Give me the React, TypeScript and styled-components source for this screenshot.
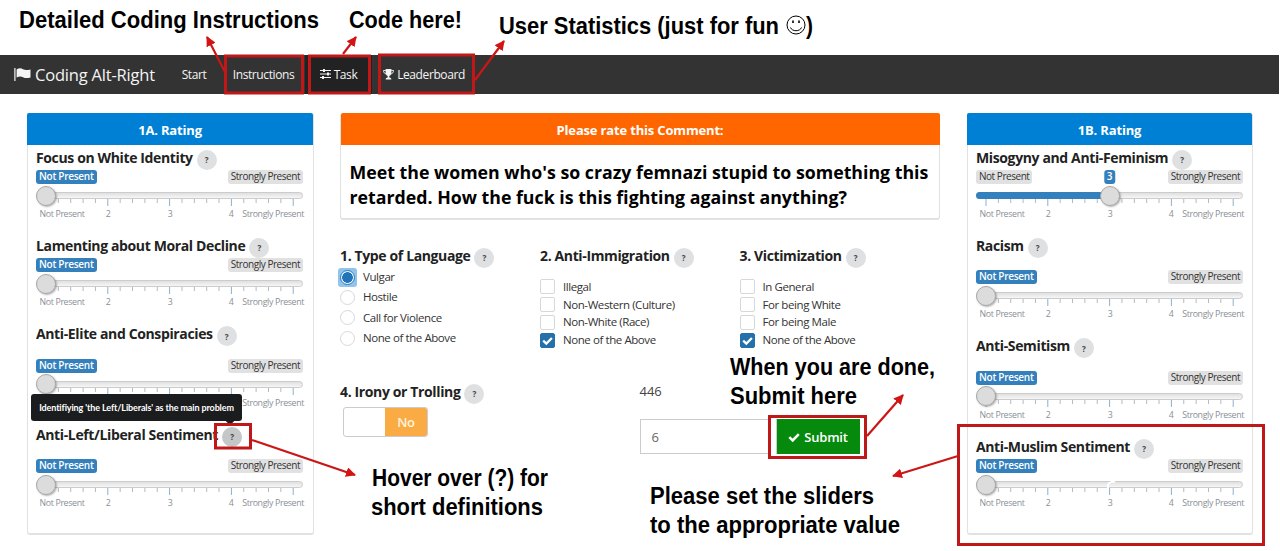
import React from "react";
import styled, { createGlobalStyle, css } from "styled-components";

const Global = createGlobalStyle`
  * { box-sizing: border-box; }
  body { margin: 0; background: #fff; font-family: "Open Sans", sans-serif; color: #222; }
`;

const Page = styled.div`
  position: relative;
  width: 1280px;
  height: 551px;
  overflow: hidden;
  padding-top: 55px;
`;

const Navbar = styled.nav`
  display: flex;
  align-items: center;
  width: 1279px;
  height: 39px;
  padding-left: 14px;
  background: #333;
  color: #f4f4f4;
`;

const Brand = styled.div`
  display: flex;
  align-items: center;
  gap: 4px;
  width: 152px;
  font-size: 16.5px;
  letter-spacing: -0.2px;
  white-space: nowrap;
`;

const NavItem = styled.a<{ $w: number; $active?: boolean }>`
  display: flex;
  align-items: center;
  justify-content: center;
  gap: 3px;
  width: ${(p) => p.$w}px;
  height: 39px;
  padding-bottom: 1px;
  font-size: 12px;
  letter-spacing: -0.4px;
  white-space: nowrap;
  background: ${(p) => (p.$active ? "#222" : "transparent")};
`;

const Main = styled.main`
  display: grid;
  grid-template-columns: 287px 600px 286px;
  column-gap: 26.5px;
  padding: 19px 0 0 26.5px;
  align-items: start;
`;

const Panel = styled.section<{ $h: number }>`
  height: ${(p) => p.$h}px;
  border: 1px solid #e2e2e2;
  border-bottom: 2px solid #e2e2e2;
  border-top: 0;
  border-radius: 3px;
`;

const PanelHead = styled.h2<{ $bg: string }>`
  display: flex;
  align-items: center;
  justify-content: center;
  height: 32px;
  margin: 0 -0.5px;
  padding-top: 1px;
  border-radius: 2px 2px 0 0;
  background: ${(p) => p.$bg};
  color: #fff;
  font-size: 13px;
  font-weight: 700;
  letter-spacing: -0.17px;
`;

const Ratings = styled.div`
  padding: 3px 8px 0 8.5px;
`;

const Heading = styled.h3`
  display: flex;
  align-items: center;
  gap: 4px;
  height: 20px;
  margin: 0;
  font-size: 14px;
  font-weight: 700;
  letter-spacing: -0.37px;
  white-space: nowrap;
`;

const HeadingText = styled.span`
  margin-top: -2px;
`;

const Help = styled.span<{ $dark?: boolean }>`
  display: flex;
  align-items: center;
  justify-content: center;
  width: 20px;
  height: 20px;
  margin-top: 3px;
  border-radius: 50%;
  background: ${(p) => (p.$dark ? "#c4c6c8" : "#dfe0e2")};
  color: #444;
  font-size: 8px;
  letter-spacing: 0;
`;

const SliderBlock = styled.div<{ $loose?: boolean }>`
  height: ${(p) => (p.$loose ? 100.5 : 88.3)}px;
`;

const Tags = styled.div<{ $loose?: boolean }>`
  display: flex;
  justify-content: space-between;
  align-items: center;
  position: relative;
  width: 267px;
  height: 14px;
  margin-top: ${(p) => (p.$loose ? 14 : 2)}px;
`;

const Tag = styled.span<{ $active?: boolean }>`
  height: 14px;
  padding: 0 3px;
  border-radius: 3px;
  background: ${(p) => (p.$active ? "#3380bd" : "#e1e1e1")};
  color: ${(p) => (p.$active ? "#fff" : "#333")};
  font-size: 10px;
  letter-spacing: -0.46px;
  line-height: 13px;
  white-space: nowrap;
  ${(p) =>
    p.$active &&
    css`
      font-weight: 600;
      letter-spacing: -0.28px;
    `}
`;

const ValueTag = styled(Tag)`
  position: absolute;
  transform: translateX(-50%);
`;

const Track = styled.div`
  position: relative;
  display: flex;
  width: 267px;
  height: 7px;
  margin-top: 8px;
  border: 1px solid #ccc;
  border-radius: 4px;
  background: linear-gradient(#e0e0e0, #f6f6f6);
`;

const Fill = styled.div`
  height: 7px;
  margin: -1px 0 0 -1px;
  border-radius: 4px 0 0 4px;
  background: #3380bd;
`;

const Thumb = styled.div`
  position: absolute;
  top: -7.5px;
  width: 20px;
  height: 20px;
  border: 1px solid #a9a9a9;
  border-radius: 50%;
  background: #dcdcdc;
  box-shadow: 1px 1px 2px rgba(0, 0, 0, 0.3);
`;

const Ruler = styled.svg`
  display: block;
  width: 267px;
  height: 8px;
`;

const Scale = styled.div`
  display: grid;
  grid-template-columns: 52px 40px 84px 38px 54px;
  height: 14px;
  margin-top: 1px;
  color: #8a8f96;
  font-size: 8.8px;
  line-height: 13px;
  text-align: center;
  white-space: nowrap;
  letter-spacing: -0.35px;
  & > :last-child { justify-self: end; }
`;

const Comment = styled.p`
  margin: 0;
  padding: 15px 8px 0 8.5px;
  color: #000;
  font-size: 17.75px;
  font-weight: 700;
  line-height: 25px;
  white-space: nowrap;
`;

const Questions = styled.div`
  display: grid;
  grid-template-columns: 200px 199.5px 200px;
  height: 136px;
  margin-top: 26px;
`;

const Options = styled.div<{ $pitch: number; $top: number }>`
  display: grid;
  grid-auto-rows: ${(p) => p.$pitch}px;
  margin-top: ${(p) => p.$top}px;
`;

const Option = styled.label`
  display: flex;
  align-items: center;
  gap: 8px;
  font-size: 11.5px;
  letter-spacing: -0.42px;
  color: #333;
  white-space: nowrap;
`;

const OptionText = styled.span`
  margin-top: -1px;
`;

const Box = styled.span<{ $on?: boolean }>`
  display: flex;
  align-items: center;
  justify-content: center;
  width: 15px;
  height: 15px;
  border: 1px solid ${(p) => (p.$on ? "#2470aa" : "#d8d8d8")};
  border-radius: 2px;
  background: ${(p) => (p.$on ? "#2470aa" : "#fff")};
`;

const Radio = styled.span<{ $on?: boolean }>`
  width: 15px;
  height: 15px;
  border: 1px solid #d8d8d8;
  border-radius: 50%;
  background: #fff;
  ${(p) =>
    p.$on &&
    css`
      border-color: #2d7dbc;
      background: radial-gradient(circle, #2274b8 5px, #eaf4fc 5.6px);
    `}
`;

const RadioFocus = styled.span<{ $on?: boolean }>`
  display: flex;
  align-items: center;
  justify-content: center;
  width: 19px;
  height: 19px;
  margin: 0 -2px;
  border-radius: 3px;
  background: ${(p) => (p.$on ? "#92c3ea" : "transparent")};
`;

const Bottom = styled.div`
  display: grid;
  grid-template-columns: 299.5px 1fr;
`;

const Switch = styled.div`
  display: flex;
  justify-content: flex-end;
  width: 85px;
  height: 30px;
  margin: 5px 0 0 3px;
  border: 1px solid #ccc;
  border-radius: 3px;
  overflow: hidden;
`;

const SwitchLabel = styled.span`
  display: flex;
  align-items: center;
  justify-content: center;
  width: 42px;
  background: #faab43;
  color: #fff5df;
  font-size: 13px;
  font-weight: 600;
  letter-spacing: -0.3px;
`;

const Counter = styled.div`
  height: 20px;
  font-size: 13px;
  line-height: 19px;
  color: #444;
`;

const SubmitRow = styled.div`
  display: flex;
  margin-top: 17px;
`;

const Field = styled.div`
  width: 137px;
  height: 35px;
  padding-left: 11px;
  border: 1px solid #ccc;
  color: #666;
  font-size: 13px;
  line-height: 34px;
`;

const Submit = styled.button`
  display: flex;
  align-items: center;
  justify-content: center;
  gap: 4px;
  width: 83px;
  height: 35px;
  padding: 0;
  border: 0;
  background: #068a0e;
  color: #fff;
  font: 600 13px "Open Sans", sans-serif;
  letter-spacing: -0.2px;
`;

const Tooltip = styled.div`
  position: absolute;
  left: 31px;
  top: 394px;
  width: 211px;
  height: 27px;
  border-radius: 3px;
  background: #1b1c1d;
  color: #fff;
  font: 700 9px/27px Lato, sans-serif;
  letter-spacing: -0.12px;
  text-align: center;
  white-space: nowrap;
  &::after {
    content: "";
    position: absolute;
    left: 196px;
    bottom: -3px;
    width: 6px;
    height: 6px;
    background: #1b1c1d;
    transform: rotate(45deg);
  }
`;

const Overlay = styled.svg`
  position: absolute;
  inset: 0;
  width: 1280px;
  height: 551px;
  pointer-events: none;
`;

const Note = styled.text`
  font-family: "Liberation Sans", sans-serif;
  font-weight: 700;
  font-size: 23.5px;
  fill: #000;
`;

const Check = ({ size }: { size: number }) => (
  <svg width={size} height={size} viewBox="0 0 12 12">
    <path d="M1.3 6.2 4.7 9.4 10.8 3.2" fill="none" stroke="#fff" strokeWidth="2.5" />
  </svg>
);

const FlagIcon = () => (
  <svg width="17" height="15" viewBox="0 0 17 15" fill="#f4f4f4">
    <path d="M.3 1h1.200v13H.3zM2.600 2.400C5 .9 7 1 9 2.200c2.300 1.200 4.500.8 7.500.2v8c-2.800.8-5.200 1-7.500-.2-2-1-4-1-6.400.4z" />
  </svg>
);

const SlidersIcon = () => (
  <svg width="11" height="10" viewBox="0 0 11 10" stroke="#f4f4f4" fill="none">
    <path d="M0 1.500h11M0 5h11M0 8.500h11" strokeWidth="1" />
    <path d="M4 0v3M8 3.500v3M3 7v3" strokeWidth="2" />
  </svg>
);

const TrophyIcon = () => (
  <svg width="11" height="11" viewBox="0 0 11 11" fill="#f4f4f4">
    <path d="M2.600 0h5.800v3.500c0 2-.9 3-2.100 3.500v1.400c1.200.2 2 .7 2 1.600v.5H2.700V10c0-.9.8-1.400 2-1.600V7C3.500 6.500 2.600 5.500 2.600 3.500z" />
    <path d="M2.800 1.500H.5c0 2 1 3.200 2.900 3.500M8.200 1.500h2.300c0 2-1 3.200-2.900 3.500" fill="none" stroke="#f4f4f4" strokeWidth=".9" />
  </svg>
);

const TICKS = Array.from({ length: 21 }, (_, i) => i);

interface TitleProps {
  children: string;
  hovered?: boolean;
}

function Title({ children, hovered }: TitleProps) {
  return (
    <Heading>
      <HeadingText>{children}</HeadingText>
      <Help $dark={hovered}>?</Help>
    </Heading>
  );
}

interface SliderProps {
  title: string;
  value?: number;
  loose?: boolean;
  hovered?: boolean;
}

function Slider({ title, value = 1, loose, hovered }: SliderProps) {
  const pos = 10 + (value - 1) * 61.8;
  return (
    <SliderBlock $loose={loose}>
      <Title hovered={hovered}>{title}</Title>
      <Tags $loose={loose}>
        <Tag $active={value === 1}>Not Present</Tag>
        {value > 1 && (
          <ValueTag $active style={{ left: pos }}>
            {value}
          </ValueTag>
        )}
        <Tag>Strongly Present</Tag>
      </Tags>
      <Track>
        {value > 1 && <Fill style={{ width: pos }} />}
        <Thumb style={{ left: pos - 11 }} />
      </Track>
      <Ruler viewBox="0 0 267 8">
        {TICKS.map((i) => (
          <line
            key={i}
            x1={10 + i * 12.36}
            x2={10 + i * 12.36}
            y1="0"
            y2={i % 5 ? 4 : 7}
            stroke={i % 5 ? "#b5bac0" : "#8fb0c8"}
          />
        ))}
      </Ruler>
      <Scale>
        <span>Not Present</span>
        <span>2</span>
        <span>3</span>
        <span>4</span>
        <span>Strongly Present</span>
      </Scale>
    </SliderBlock>
  );
}

interface CheckListProps {
  title: string;
  items: string[];
}

function CheckList({ title, items }: CheckListProps) {
  return (
    <div>
      <Title>{title}</Title>
      <Options $pitch={17.8} $top={12}>
        {items.map((t, i) => (
          <Option key={t}>
            <Box $on={i === 3}>{i === 3 && <Check size={11} />}</Box>
            <OptionText>{t}</OptionText>
          </Option>
        ))}
      </Options>
    </div>
  );
}

const NOTES: [string, number, number, number][] = [
  ["Detailed Coding Instructions", 19, 28, 300],
  ["Code here!", 349, 28, 113],
  ["User Statistics (just for fun", 499, 34, 280],
  [")", 806, 34, 7],
  ["Hover over (?) for", 372, 486, 176],
  ["short definitions", 371, 515, 172],
  ["When you are done,", 730, 375, 205],
  ["Submit here", 730, 404, 127],
  ["Please set the sliders", 650, 504, 224],
  ["to the appropriate value", 650, 533, 250],
];

const FRAMES = [
  [225.5, 56, 77, 37],
  [309.5, 56, 60, 37],
  [379.5, 55, 94, 38],
  [215.5, 424.5, 35, 23.5],
  [769.5, 416.5, 96, 41],
  [958.5, 425.5, 305, 119],
];

const ARROWS = [
  [225, 72, 207, 37],
  [343, 54, 356, 37],
  [475, 80, 504, 41],
  [252, 440, 355, 475],
  [867, 436, 903, 395],
  [958, 456, 893, 476],
];

export default function App() {
  return (
    <Page>
      <Global />
      <Navbar>
        <Brand>
          <FlagIcon />
          Coding Alt-Right
        </Brand>
        <NavItem $w={56}>Start</NavItem>
        <NavItem $w={83}>Instructions</NavItem>
        <NavItem $w={67} $active>
          <SlidersIcon />
          Task
        </NavItem>
        <NavItem $w={104}>
          <TrophyIcon />
          Leaderboard
        </NavItem>
      </Navbar>
      <Main>
        <Panel $h={422}>
          <PanelHead $bg="#0080d5">1A. Rating</PanelHead>
          <Ratings>
            <Slider title="Focus on White Identity" />
            <Slider title="Lamenting about Moral Decline" />
            <Slider title="Anti-Elite and Conspiracies" loose />
            <Slider title="Anti-Left/Liberal Sentiment" loose hovered />
          </Ratings>
        </Panel>
        <div>
          <Panel $h={107}>
            <PanelHead $bg="#ff6600">Please rate this Comment:</PanelHead>
            <Comment>
              Meet the women who's so crazy femnazi stupid to something this
              <br />
              retarded. How the fuck is this fighting against anything?
            </Comment>
          </Panel>
          <Questions>
            <div>
              <Title>1. Type of Language</Title>
              <Options $pitch={20.3} $top={1}>
                {["Vulgar", "Hostile", "Call for Violence", "None of the Above"].map((t, i) => (
                  <Option key={t}>
                    <RadioFocus $on={i === 0}>
                      <Radio $on={i === 0} />
                    </RadioFocus>
                    <OptionText>{t}</OptionText>
                  </Option>
                ))}
              </Options>
            </div>
            <CheckList
              title="2. Anti-Immigration"
              items={["Illegal", "Non-Western (Culture)", "Non-White (Race)", "None of the Above"]}
            />
            <CheckList
              title="3. Victimization"
              items={["In General", "For being White", "For being Male", "None of the Above"]}
            />
          </Questions>
          <Bottom>
            <div>
              <Title>4. Irony or Trolling</Title>
              <Switch>
                <SwitchLabel>No</SwitchLabel>
              </Switch>
            </div>
            <div>
              <Counter>446</Counter>
              <SubmitRow>
                <Field>6</Field>
                <Submit>
                  <Check size={12} />
                  Submit
                </Submit>
              </SubmitRow>
            </div>
          </Bottom>
        </div>
        <Panel $h={422}>
          <PanelHead $bg="#0080d5">1B. Rating</PanelHead>
          <Ratings>
            <Slider title="Misogyny and Anti-Feminism" value={3} />
            <Slider title="Racism" loose />
            <Slider title="Anti-Semitism" loose />
            <Slider title="Anti-Muslim Sentiment" />
          </Ratings>
        </Panel>
      </Main>
      <Tooltip>Identifiying 'the Left/Liberals' as the main problem</Tooltip>
      <Overlay viewBox="0 0 1280 551">
        <defs>
          <marker id="head" viewBox="0 0 10 10" refX="9" refY="5" markerWidth="10" markerHeight="10" markerUnits="userSpaceOnUse" orient="auto">
            <path d="M0 0 10 5 0 10z" fill="#d31414" />
          </marker>
        </defs>
        <path d="M1108 488c-1-4 2-7 7-6" fill="none" stroke="#fff" strokeWidth="2" />
        <rect x="768" y="418" width="8" height="38" fill="#fff" />
        {FRAMES.map(([x, y, w, h]) => (
          <rect key={`${x}-${y}`} x={x} y={y} width={w} height={h} fill="none" stroke="#c01818" strokeWidth="3" />
        ))}
        {ARROWS.map(([x1, y1, x2, y2]) => (
          <line key={`${x1}-${y1}`} x1={x1} y1={y1} x2={x2} y2={y2} stroke="#cc1616" strokeWidth="2.2" markerEnd="url(#head)" />
        ))}
        {NOTES.map(([t, x, y, w]) => (
          <Note key={t} x={x} y={y} textLength={w} lengthAdjust="spacingAndGlyphs">
            {t}
          </Note>
        ))}
        <g fill="none" stroke="#000" strokeWidth="1">
          <circle cx="796" cy="25" r="9" />
          <path d="M790.500 27.500c1.500 4.300 9.500 4.300 11 0" />
          <path d="M793 20.500v2.500M799 20.500v2.500" strokeWidth="1.600" />
        </g>
      </Overlay>
    </Page>
  );
}
